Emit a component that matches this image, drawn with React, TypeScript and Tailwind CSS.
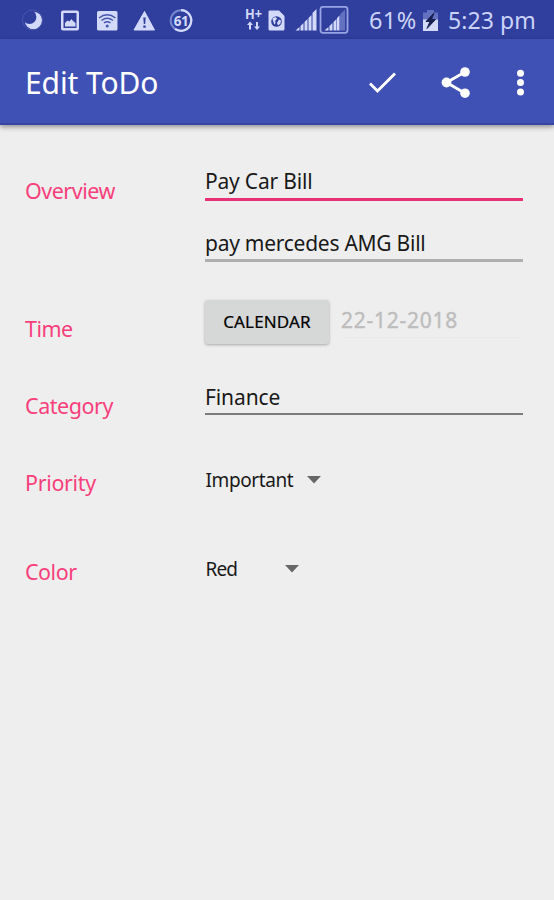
import type { ReactNode } from "react";

function StatusBar() {
  return (
    <div className="flex h-[39px] shrink-0 items-center bg-[#303f9e] text-[#cbd3f8]">
      <svg className="h-10 w-[200px]" viewBox="0 0 200 40" fill="#d3daf9">
        <circle cx="33.500" cy="20.500" r="8.700" />
        <circle cx="29.500" cy="17" r="6.900" fill="#303f9e" />
        <circle cx="32.500" cy="20" r="10" fill="none" stroke="#4655ac" strokeWidth="1" />
        <path fillRule="evenodd" d="M63 10.500h14a2 2 0 0 1 2 2v16a2 2 0 0 1-2 2h-14a2 2 0 0 1-2-2v-16a2 2 0 0 1 2-2zm.5 2.500v15h13v-15z" />
        <path d="M65 26.500v-3.500l2.500-2.500 2 1 2-2.500 1.500 2 2.500 2v3.500z" />
        <rect x="97" y="11" width="20.500" height="19.500" rx="1.500" />
        <g fill="none" stroke="#4655ac" strokeWidth="1.500">
          <path d="M99 18q8.200-6.500 16.500 0M101.500 20.500q5.700-4.500 11.500 0M104 23q3.200-2.500 6.500 0" />
        </g>
        <circle cx="107.200" cy="26" r="1.500" fill="#4655ac" />
        <path d="M144.500 11.500 154.500 30h-20.500z" stroke="#d3daf9" strokeLinejoin="round" />
        <path d="M143.300 17.500h2.400l-.5 6.500h-1.400zM143.300 25.500h2.400v2.300h-2.400z" fill="#303f9e" />
        <circle cx="181" cy="20.500" r="10.300" fill="none" stroke="#7784ce" strokeWidth="2" />
        <path d="M181 10.200a10.300 10.300 0 1 1-6 18.700" fill="none" stroke="#d3daf9" strokeWidth="2.200" />
        <text x="181" y="25.500" textAnchor="middle" fontFamily="Noto Sans, sans-serif" fontWeight="700" fontSize="13.500" letterSpacing="-0.500">61</text>
      </svg>
      <svg className="ml-[42px] h-10 w-[110px]" viewBox="242 0 110 40" fill="#d3daf9">
        <text x="245" y="19.300" fontFamily="Noto Sans, sans-serif" fontWeight="700" fontSize="14" textLength="17" lengthAdjust="spacingAndGlyphs">H+</text>
        <path d="M250 21.500l3 3.500h-2v4.500h-2v-4.500h-2zM257 30l-3-3.500h2v-4.500h2v4.500h2z" />
        <path d="M269.500 10.500h9.500l5.500 5.500v13a1.500 1.500 0 0 1-1.500 1.500h-13a1.500 1.500 0 0 1-1.500-1.500v-17a1.500 1.500 0 0 1 1-1.500z" />
        <circle cx="276.500" cy="21.500" r="5.300" fill="#303f9e" />
        <path d="M272.300 18.500l3-1.500 1.800 1.500-2 2.500.5 2-1.300 1.500zM279 19.500l2 1-.5 3-2.500 2-1-2.500z" />
        <path d="M295.500 30.500l4-3.500v3.500zM300.500 26l3-3v7.500h-3zM304.500 22l3-3v11.500h-3zM308.500 18l3-3v15.500h-3zM312.500 13l4-4v21.500h-4z" />
        <rect x="320.500" y="6.800" width="27" height="26" rx="2.500" fill="none" stroke="#98a4e3" strokeWidth="1.800" />
        <path d="M324.500 30.500l4-3.500v3.500zM329.500 26l3-3v7.500h-3zM333.500 22l3-3v11.500h-3zM337 18l2.500-2.500v15h-2.500z" />
        <path d="M340 14.500l5-5v21h-5z" fill="#6371c0" />
      </svg>
      <span className="ml-[17px] w-[50px] whitespace-nowrap text-[23.5px] leading-10 tracking-[0.4px]">61%</span>
      <svg className="ml-[3px] h-10 w-[18px]" viewBox="422 0 18 40">
        <path d="M427 10h7v2.500h4v7.500h-15v-7.500h4z" fill="#6371c0" />
        <path d="M423 19.500h15v11.500h-15z" fill="#d3daf9" />
        <path d="M434 13l-8 8.500h4l-3 7 8.500-9h-4z" fill="#17204f" stroke="#17204f" />
      </svg>
      <span className="ml-[8px] whitespace-nowrap text-[23px] leading-10 tracking-[0.1px]">5:23 pm</span>
    </div>
  );
}

function AppBar() {
  return (
    <header className="flex h-[86px] shrink-0 items-center border-b-2 border-[#3445a5] bg-[#3f51b5] pl-[25px] shadow-[0_2px_5px_rgba(0,0,0,0.4)]">
      <h1 className="flex-1 whitespace-nowrap pt-[3px] text-[30px] leading-[40px] tracking-[-0.1px] text-white">Edit ToDo</h1>
      <svg className="h-[80px] w-[204px]" viewBox="350 41 204 80" fill="white">
        <path d="M370 83.500l7.500 7.500 17.500-17.500" fill="none" stroke="white" strokeWidth="2.800" />
        <path d="M465 72l-18.500 10.500 18.500 10.700" fill="none" stroke="white" strokeWidth="2.800" />
        <circle cx="465" cy="72" r="4.800" />
        <circle cx="446.500" cy="82.500" r="4.900" />
        <circle cx="465" cy="93.200" r="4.800" />
        <circle cx="520.500" cy="73.300" r="3.500" />
        <circle cx="520.500" cy="82.600" r="3.500" />
        <circle cx="520.500" cy="92" r="3.500" />
      </svg>
    </header>
  );
}

function Row({ className, label, labelClass, children }: { className: string; label: string; labelClass: string; children: ReactNode }) {
  return (
    <div className={`flex items-start ${className}`}>
      <div className={`w-[180px] shrink-0 whitespace-nowrap text-[21.5px] leading-[28px] text-[#f73f7c] ${labelClass}`}>{label}</div>
      <div className="flex-1">{children}</div>
    </div>
  );
}

function Arrow() {
  return (
    <svg className="h-2 w-[14px]" viewBox="0 0 14 8">
      <path d="M0 0h14l-7 7.500z" fill="#666" />
    </svg>
  );
}

export default function App() {
  return (
    <div className="flex h-[900px] w-[554px] flex-col overflow-hidden bg-[#eee] font-['Noto_Sans','Open_Sans',sans-serif]">
      <StatusBar />
      <AppBar />
      <main className="flex flex-col pl-[25px] pr-[31px] pt-[42px] text-[#191919]">
        <Row className="h-[132px]" label="Overview" labelClass="pt-[10px] tracking-[-0.5px]">
          <div className="h-[34px] border-b-[3px] border-[#e92f75] text-[21px] leading-[28px] tracking-[-0.2px]">Pay Car Bill</div>
          <div className="mt-[27px] h-[34px] border-b-[3px] border-[#afafaf] pt-px text-[21px] leading-[28px] tracking-[-0.26px]">pay mercedes AMG Bill</div>
        </Row>
        <Row className="h-[76px]" label="Time" labelClass="pt-[16px] tracking-[-0.5px]">
          <div className="flex items-start">
            <button className="mt-px h-[44px] w-[124px] whitespace-nowrap rounded-[3px] bg-[#d6d7d7] text-[17px] leading-[44px] tracking-[0.15px] text-black shadow-[0_1px_3px_rgba(0,0,0,0.3)] [-webkit-text-stroke:0.2px_black]">CALENDAR</button>
            <span className="ml-[12px] h-[39px] flex-1 whitespace-nowrap border-b border-[#eaeaea] pt-[7px] text-[21px] leading-[28px] tracking-[0.75px] text-[#bdbdbd] [-webkit-text-stroke:0.4px_#bdbdbd]">22-12-2018</span>
          </div>
        </Row>
        <Row className="h-[92px]" label="Category" labelClass="pt-[17px] tracking-[-0.45px]">
          <div className="h-[40px] border-b-2 border-[#7b7b7b] pt-[8px] text-[21px] leading-[28px] tracking-[-0.1px]">Finance</div>
        </Row>
        <Row className="h-[90px]" label="Priority" labelClass="pt-[2px] tracking-[-0.35px]">
          <div className="-mt-px flex items-center text-[19px] leading-[28px] tracking-[-0.4px]">
            <span className="w-[102px] pl-[0.5px]">Important</span>
            <Arrow />
          </div>
        </Row>
        <Row className="h-[90px]" label="Color" labelClass="pt-px tracking-[-0.5px]">
          <div className="-mt-[2px] flex items-center text-[19px] leading-[28px] tracking-[-0.9px]">
            <span className="w-[80px] pl-[0.5px]">Red</span>
            <Arrow />
          </div>
        </Row>
      </main>
    </div>
  );
}
